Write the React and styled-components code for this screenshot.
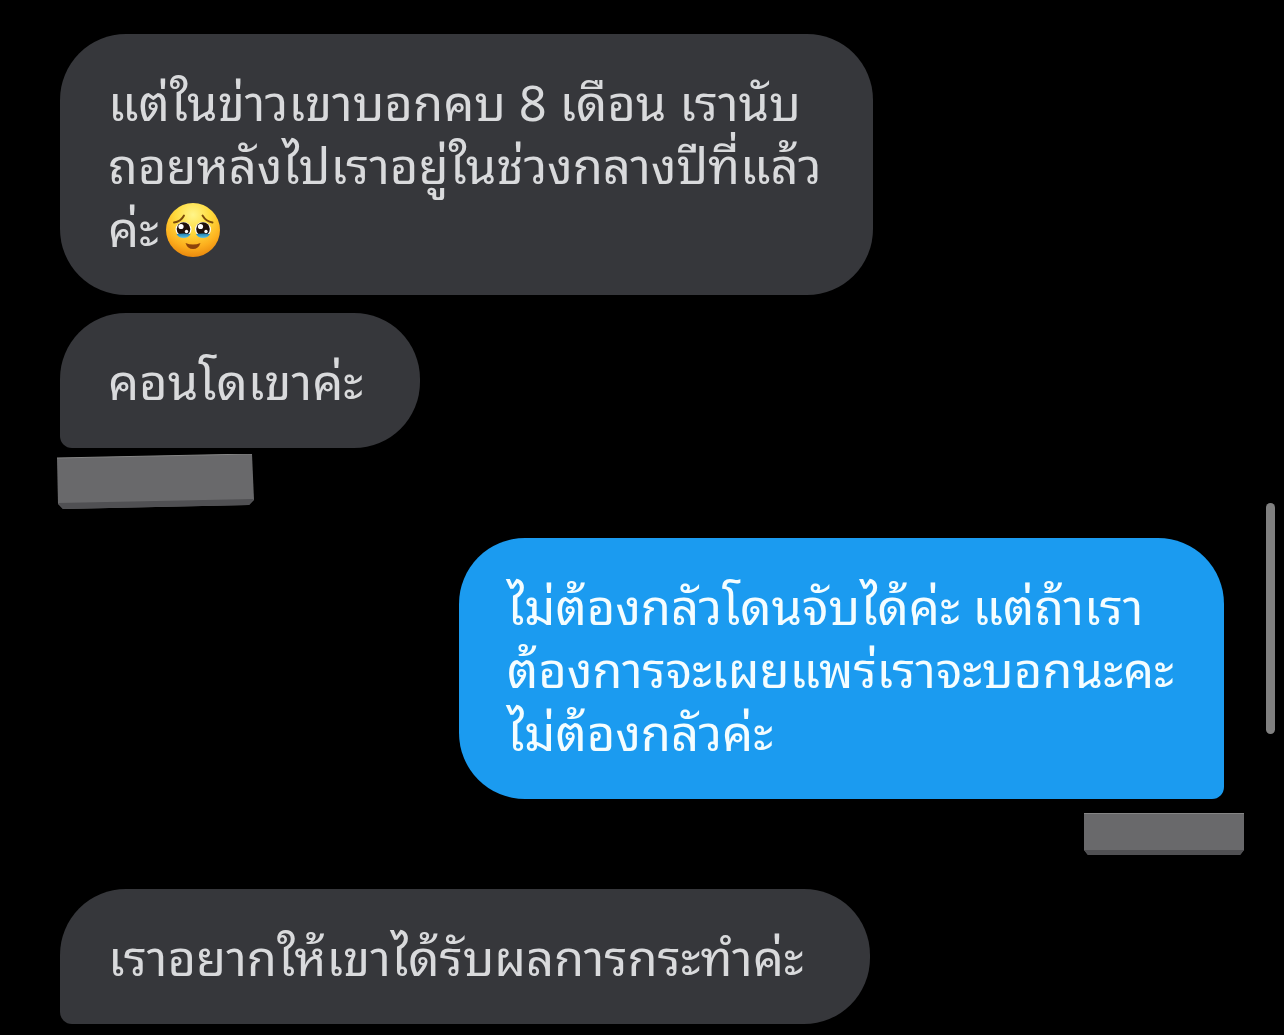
import React from "react";
import styled, { createGlobalStyle } from "styled-components";

const GlobalStyle = createGlobalStyle`
  * { box-sizing: border-box; }
  html { overflow-x: hidden; scrollbar-width: none; background: #000; }
  body {
    margin: 0;
    background: #000;
    font-family: "Noto Sans Thai Looped", "Noto Looped Thai", Sarabun, Loma, Garuda, Waree, "Noto Sans Thai", "Noto Sans", "Liberation Sans", sans-serif;
  }
`;

const Page = styled.main`
  padding: 34px 60px 11px;
`;

const Thread = styled.ol`
  display: flex;
  flex-direction: column;
  margin: 0;
  padding: 0;
  list-style: none;
`;

const Row = styled.li`
  display: flex;
  flex-direction: column;
  align-items: ${(p) => (p.$mine ? "flex-end" : "flex-start")};
  margin-bottom: ${(p) => p.$after || 0}px;
`;

const Bubble = styled.p`
  width: ${(p) => p.$width}px;
  max-width: 100%;
  margin: 0;
  padding: 34px 48px 38px;
  border-radius: 66px;
  border-bottom-left-radius: ${(p) => (p.$tail === "left" ? 12 : 66)}px;
  border-bottom-right-radius: ${(p) => (p.$tail === "right" ? 12 : 66)}px;
  background: ${(p) => (p.$mine ? "#1b9bf0" : "#36373b")};
  color: ${(p) => (p.$mine ? "#f4fdff" : "#d9dadc")};
  font-size: 49px;
  line-height: 63px;
  white-space: nowrap;
`;

const Emoji = styled.svg`
  width: 56px;
  height: 56px;
  margin: -6px 0 -6px 6px;
  vertical-align: -5px;
`;

const Stamp = styled.svg`
  display: block;
  margin: ${(p) => (p.$mine ? "13px -20px 0 0" : "6px 0 0 -3px")};
`;

const ScrollThumb = styled.div`
  position: fixed;
  top: 503px;
  right: 9px;
  width: 9px;
  height: 231px;
  border-radius: 5px;
  background: #808080;
`;

function TearyFace() {
  return (
    <Emoji viewBox="0 0 56 56" role="img" aria-label="🥹">
      <defs>
        <radialGradient id="face" cx="50%" cy="22%" r="80%">
          <stop offset="0" stopColor="#fff58a" />
          <stop offset=".4" stopColor="#ffdc3e" />
          <stop offset=".75" stopColor="#fcae1d" />
          <stop offset="1" stopColor="#e8850c" />
        </radialGradient>
        <linearGradient id="tear" x1="0" y1="0" x2="0" y2="1">
          <stop offset="0" stopColor="#1c7fb0" />
          <stop offset="1" stopColor="#62c4e4" />
        </linearGradient>
      </defs>
      <circle cx="28" cy="28" r="27" fill="url(#face)" />
      <path d="M9 20.500Q16 19.500 19 13.500M37.500 13.500Q41 19.500 47.500 20.500" fill="none" stroke="#7c4b0a" strokeWidth="1.900" strokeLinecap="round" />
      {[18.5, 38].map((x) => (
        <g key={x}>
          <ellipse cx={x} cy="27.500" rx="8" ry="7.500" fill="#fff" />
          <circle cx={x} cy="27" r="6.800" fill="#20120c" />
          <path d={`M${x - 7} 32Q${x} 31 ${x + 7} 32Q${x + 5} 36 ${x} 36Q${x - 5} 36 ${x - 7} 32Z`} fill="url(#tear)" />
          <circle cx={x - 2.5} cy="24.500" r="2.600" fill="#fff" />
          <circle cx={x + 3} cy="29.500" r="1.700" fill="#fff" />
        </g>
      ))}
      <path d="M20.500 41Q28 44 35.500 41Q33.500 47 28 47Q22.500 47 20.500 41Z" fill="#8d430b" />
    </Emoji>
  );
}

function LeftStamp() {
  return (
    <Stamp width="197" height="55" viewBox="0 0 197 55" aria-hidden="true">
      <path d="M0 4L195 0L197 46L192 51L6 55L1 50Z" fill="#69696b" />
      <path d="M1 49L197 45L192 51L6 55Z" fill="#505053" />
      <path d="M0 4L195 0" stroke="#858585" />
    </Stamp>
  );
}

function RightStamp() {
  return (
    <Stamp $mine width="160" height="43" viewBox="0 0 160 43" aria-hidden="true">
      <path d="M0 1H160V38L156 43H4L0 38Z" fill="#69696b" />
      <path d="M0 38H160L156 43H4Z" fill="#505053" />
      <path d="M0 1.500H160" stroke="#858585" />
    </Stamp>
  );
}

export default function App() {
  return (
    <Page lang="th">
      <GlobalStyle />
      <Thread>
        <Row $after={18}>
          <Bubble $width={813}>
            แต่ในข่าวเขาบอกคบ 8 เดือน เรานับ
            <br />
            ถอยหลังไปเราอยู่ในช่วงกลางปีที่แล้ว
            <br />
            ค่ะ
            <TearyFace />
          </Bubble>
        </Row>
        <Row $after={29}>
          <Bubble $width={360} $tail="left">คอนโดเขาค่ะ</Bubble>
          <LeftStamp />
        </Row>
        <Row $mine $after={34}>
          <Bubble $mine $width={765} $tail="right">
            ไม่ต้องกลัวโดนจับได้ค่ะ แต่ถ้าเรา
            <br />
            ต้องการจะเผยแพร่เราจะบอกนะคะ
            <br />
            ไม่ต้องกลัวค่ะ
          </Bubble>
          <RightStamp />
        </Row>
        <Row>
          <Bubble $width={810} $tail="left">เราอยากให้เขาได้รับผลการกระทำค่ะ</Bubble>
        </Row>
      </Thread>
      <ScrollThumb />
    </Page>
  );
}
